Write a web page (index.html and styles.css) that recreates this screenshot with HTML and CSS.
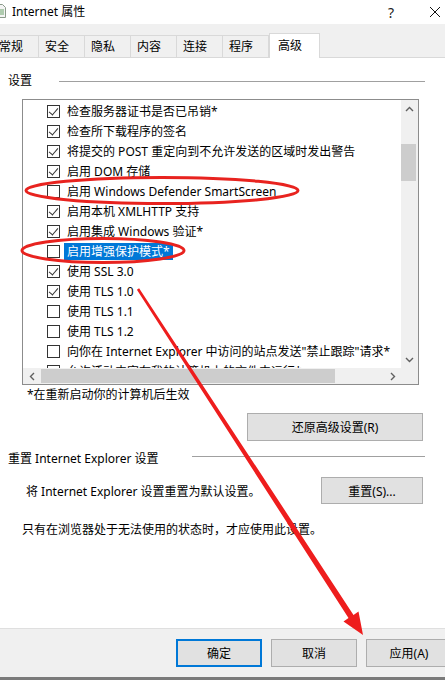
FILE: index.html
```html
<!DOCTYPE html>
<html lang="zh-CN">
<head>
    <meta charset="UTF-8">
    <title>Internet 属性</title>
    <link rel="stylesheet" href="styles.css">
</head>
<body>
<div class="win">
    <div class="titlebar">
        <svg class="appicon" width="10" height="14" viewBox="0 0 10 14">
            <path d="M0.5 0.5h6l3 3v10h-9z" fill="#f4f4f4" stroke="#8a9a8a"/>
            <path d="M2 6h6M2 8h6M2 10h6" stroke="#6aa36a"/>
        </svg>
        <span class="title">Internet 属性</span>
        <span class="help">?</span>
        <svg class="close" width="12" height="12" viewBox="0 0 12 12">
            <path d="M1 1l10 10M11 1l-10 10" stroke="#111" stroke-width="1"/>
        </svg>
    </div>

    <div class="tabs">
        <div class="tab first">常规</div>
        <div class="tab">安全</div>
        <div class="tab">隐私</div>
        <div class="tab">内容</div>
        <div class="tab">连接</div>
        <div class="tab">程序</div>
        <div class="tab active">高级</div>
    </div>

    <div class="panel">
        <div class="group">
            <span>设置</span>
            <i class="rule"></i>
        </div>

        <div class="listbox">
            <div class="view">
                <div class="rows">
                    <div class="row"><i class="cb on"></i>检查服务器证书是否已吊销*</div>
                    <div class="row"><i class="cb on"></i>检查所下载程序的签名</div>
                    <div class="row"><i class="cb on"></i>将提交的 POST 重定向到不允许发送的区域时发出警告</div>
                    <div class="row"><i class="cb on"></i>启用 DOM 存储</div>
                    <div class="row"><i class="cb"></i>启用 Windows Defender SmartScreen</div>
                    <div class="row"><i class="cb on"></i>启用本机 XMLHTTP 支持</div>
                    <div class="row"><i class="cb on"></i>启用集成 Windows 验证*</div>
                    <div class="row"><i class="cb"></i><span class="sel">启用增强保护模式*</span></div>
                    <div class="row"><i class="cb on"></i>使用 SSL 3.0</div>
                    <div class="row"><i class="cb on"></i>使用 TLS 1.0</div>
                    <div class="row"><i class="cb"></i>使用 TLS 1.1</div>
                    <div class="row"><i class="cb"></i>使用 TLS 1.2</div>
                    <div class="row"><i class="cb"></i>向你在 Internet Explorer 中访问的站点发送"禁止跟踪"请求*</div>
                    <div class="row"><i class="cb"></i>允许活动内容在我的计算机上的文件中运行*</div>
                </div>
                <div class="vscroll">
                    <div class="arrow">
                        <svg width="9" height="6" viewBox="0 0 9 6"><path d="M1 5l3.5-3.5L8 5" fill="none" stroke="#606060" stroke-width="1.4"/></svg>
                    </div>
                    <div class="track"><div class="thumb"></div></div>
                    <div class="arrow">
                        <svg width="9" height="6" viewBox="0 0 9 6"><path d="M1 1l3.5 3.5L8 1" fill="none" stroke="#606060" stroke-width="1.4"/></svg>
                    </div>
                </div>
            </div>
            <div class="hscroll">
                <div class="arrow">
                    <svg width="6" height="9" viewBox="0 0 6 9"><path d="M5 1L1.5 4.5 5 8" fill="none" stroke="#606060" stroke-width="1.4"/></svg>
                </div>
                <div class="htrack"><div class="hthumb"></div></div>
                <div class="arrow">
                    <svg width="6" height="9" viewBox="0 0 6 9"><path d="M1 1l3.5 3.5L1 8" fill="none" stroke="#606060" stroke-width="1.4"/></svg>
                </div>
                <div class="corner"></div>
            </div>
        </div>

        <p class="note">*在重新启动你的计算机后生效</p>

        <div class="btnrow">
            <button class="btn restore">还原高级设置(R)</button>
        </div>

        <div class="group reset">
            <span>重置 Internet Explorer 设置</span>
            <i class="rule"></i>
        </div>

        <div class="resetrow">
            <span>将 Internet Explorer 设置重置为默认设置。</span>
            <button class="btn resetbtn">重置(S)...</button>
        </div>

        <p class="warn">只有在浏览器处于无法使用的状态时，才应使用此设置。</p>
    </div>

    <div class="footer">
        <button class="btn fbtn ok">确定</button>
        <button class="btn fbtn">取消</button>
        <button class="btn fbtn">应用(A)</button>
    </div>

    <!-- red marks drawn over the dialog -->
    <svg class="marks" width="445" height="680" viewBox="0 0 445 680">
        <ellipse cx="162" cy="190.5" rx="136" ry="13" fill="none" stroke="#e8231f" stroke-width="3"/>
        <ellipse cx="103" cy="250.5" rx="81" ry="12" fill="none" stroke="#e8231f" stroke-width="3"/>
        <polygon points="136.9,289.7 139.1,288.3 353.5,614.9 358.5,611.6 363,635 343.5,621.4 348.5,618.1" fill="#ee1d1d"/>
    </svg>
</div>
</body>
</html>
```

FILE: styles.css
```css
*{
    margin: 0;
    padding: 0;
    box-sizing: border-box;
}

body{
    font-family: "Noto Sans", "Noto Sans CJK SC", sans-serif;
    font-size: 12px;
    color: #000000;
    background-color: #ffffff;
}

.win{
    position: relative;
    width: 445px;
    height: 680px;
    overflow: hidden;
    display: flex;
    flex-direction: column;
}

/* title bar */
.titlebar{
    height: 24px;
    background-color: #ffffff;
    display: flex;
    align-items: center;
}

.appicon{
    margin-left: -4px;
    margin-top: -2px;
}

.title{
    margin-left: 6px;
    line-height: 16px;
}

.help{
    margin-left: auto;
    font-size: 14px;
    color: #222222;
}

.close{
    margin-left: 35px;
    margin-right: 4px;
}

/* tabs */
.tabs{
    height: 33px;
    background-color: #f0f0f0;
    display: flex;
    align-items: flex-end;
    margin-left: -8px;
}

.tab{
    width: 47px;
    height: 22px;
    line-height: 21px;
    padding-left: 6px;
    background-color: #f0f0f0;
    border: 1px solid #d9d9d9;
    border-bottom: none;
    margin-right: -1px;
    white-space: nowrap;
}

.tab.active{
    width: 51px;
    height: 25px;
    line-height: 23px;
    padding-left: 8px;
    margin-left: 1px;
    margin-bottom: -1px;
    background-color: #ffffff;
    position: relative;
    z-index: 1;
}

/* page */
.panel{
    flex: 1;
    background-color: #ffffff;
    border-top: 1px solid #d9d9d9;
    padding: 0 22px 0 8px;
}

.group{
    display: flex;
    align-items: center;
    margin-top: 15px;
    line-height: 16px;
}

.rule{
    flex: 1;
    height: 1px;
    background-color: #a0a0a0;
    margin-left: 27px;
    margin-right: -2px;
}

.listbox{
    margin-top: 10px;
    margin-left: 14px;
    width: 397px;
    height: 286px;
    border: 1px solid #8c8c8c;
    display: flex;
    flex-direction: column;
}

.view{
    height: 268px;
    display: flex;
}

.rows{
    flex: 1;
    overflow: hidden;
    padding-top: 1px;
}

.row{
    height: 20px;
    display: flex;
    align-items: center;
    padding-left: 24px;
    white-space: nowrap;
}

.cb{
    position: relative;
    flex: none;
    width: 13px;
    height: 13px;
    border: 1px solid #333333;
    margin-right: 7px;
}

.cb.on::after{
    content: "";
    position: absolute;
    left: 3px;
    top: 0px;
    width: 4px;
    height: 8px;
    border: solid #333333;
    border-width: 0 1px 1px 0;
    transform: rotate(40deg);
}

.sel{
    background-color: #0078d7;
    color: #ffffff;
    line-height: 17px;
    padding: 0 3px;
    margin-left: -3px;
}

.vscroll{
    width: 17px;
    background-color: #f0f0f0;
    display: flex;
    flex-direction: column;
}

.arrow{
    width: 17px;
    height: 17px;
    display: flex;
    align-items: center;
    justify-content: center;
    flex: none;
}

.track{
    flex: 1;
    padding-top: 27px;
}

.thumb{
    width: 15px;
    height: 37px;
    background-color: #cdcdcd;
}

.hscroll{
    height: 16px;
    background-color: #f0f0f0;
    display: flex;
}

.hscroll .arrow{
    height: 16px;
}

.htrack{
    flex: 1;
    padding: 1px 0 1px 1px;
}

.hthumb{
    width: 294px;
    height: 14px;
    background-color: #cdcdcd;
}

.corner{
    width: 17px;
    background-color: #f0f0f0;
}

.note{
    margin-top: 2px;
    margin-left: 19px;
    line-height: 16px;
}

.btn{
    font-family: inherit;
    font-size: 12px;
    color: #000000;
    background-color: #e1e1e1;
    border: 1px solid #adadad;
}

.btnrow{
    display: flex;
    justify-content: flex-end;
    margin-top: 10px;
}

.restore{
    width: 176px;
    height: 28px;
}

.group.reset{
    margin-top: 10px;
    align-items: flex-start;
}

.group.reset .rule{
    margin-top: 5px;
    margin-left: 33px;
}

.resetrow{
    display: flex;
    align-items: center;
    margin-top: 10px;
    padding-left: 18px;
}

.resetbtn{
    margin-left: auto;
    width: 102px;
    height: 27px;
}

.warn{
    margin-top: 18px;
    margin-left: 14px;
    line-height: 16px;
}

/* bottom buttons */
.footer{
    height: 52px;
    background-color: #f0f0f0;
    border-top: 1px solid #dfdfdf;
    border-bottom: 3px solid #7a7a7a;
    display: flex;
    gap: 9px;
    padding: 10px 0 0 176px;
    overflow: hidden;
}

.fbtn{
    flex: none;
    width: 86px;
    height: 28px;
}

.fbtn.ok{
    border: 2px solid #0078d7;
}

.marks{
    position: absolute;
    top: 0;
    left: 0;
    pointer-events: none;
}
```
